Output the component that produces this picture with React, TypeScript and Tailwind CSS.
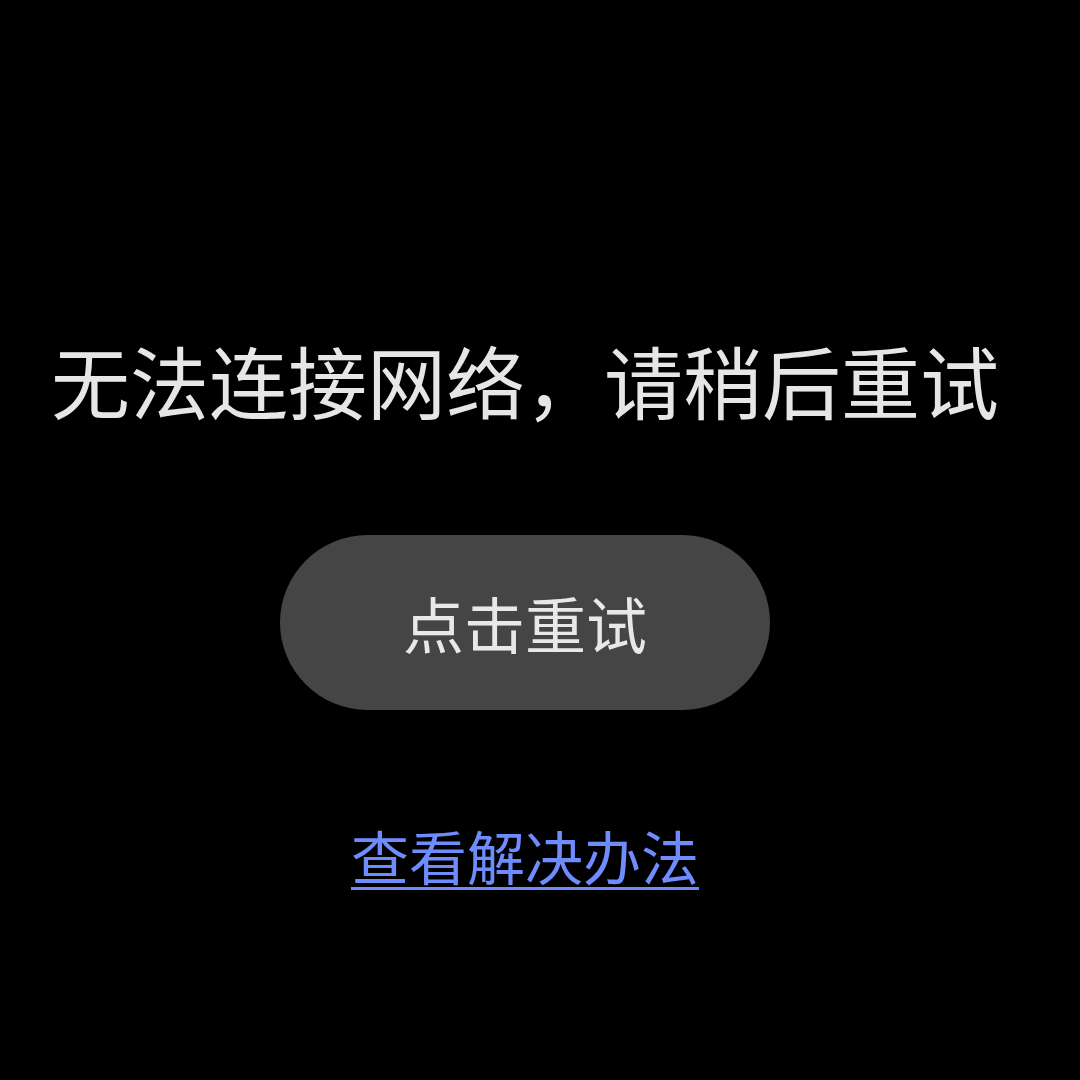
export default function App() {
  return (
    <div
      className="flex h-[1080px] w-[1080px] flex-col items-center bg-black pr-[30px]"
      style={{ fontFamily: '"Noto Sans CJK SC", "Noto Sans", sans-serif' }}
    >
      {/* 标题 */}
      <div className="mt-[340px] text-[79px] leading-[80px] text-[#e6e6e6]">
        无法连接网络，请稍后重试
      </div>

      {/* 重试按钮 */}
      <button className="mt-[115px] flex h-[175px] w-[490px] items-center justify-center rounded-full bg-[#454545] text-[61px] leading-none text-[#e8e8e8]">
        点击重试
      </button>

      {/* 解决办法链接 */}
      <a className="mt-[116px] text-[58px] leading-[58px] text-[#6f8cff] underline decoration-[3px] underline-offset-[7px]">
        查看解决办法
      </a>
    </div>
  );
}
